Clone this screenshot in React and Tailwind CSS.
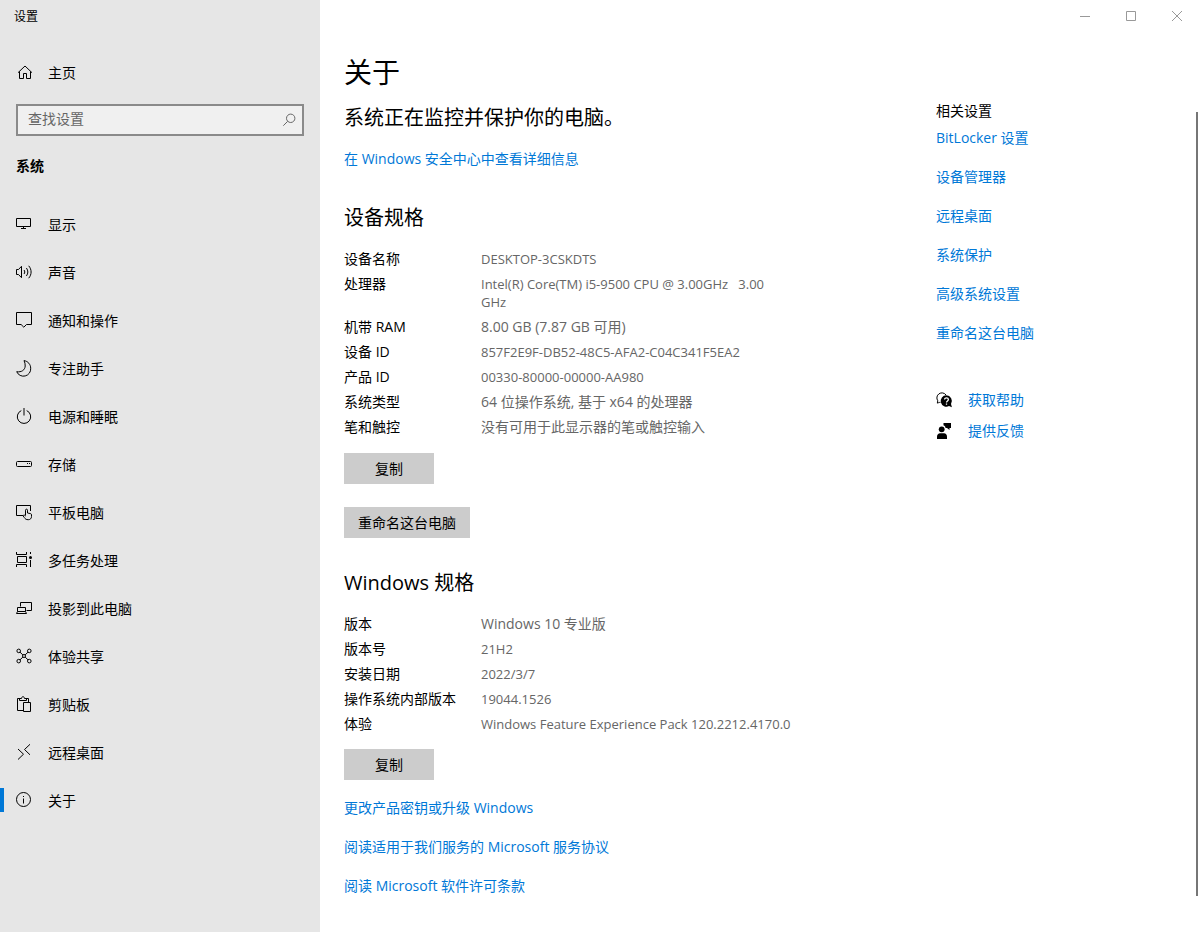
import React from "react";
import { useState } from "react";

const Icon = ({ children }) => (
  <svg
    width="16"
    height="16"
    viewBox="0 0 16 16"
    fill="none"
    stroke="currentColor"
    strokeWidth="1"
    className="shrink-0 overflow-visible"
    aria-hidden="true"
  >
    {children}
  </svg>
);

const HomeIcon = () => (
  <Icon>
    <path d="M2 8.700 9 2l7 6.700M3.500 7.500v7h4v-5h3v5h4v-7" />
  </Icon>
);

const menu = [
  {
    label: "显示",
    icon: <path d="M.5 2.500h14v8H.5zM7.500 10.500v2M5 12.500h5" />,
  },
  {
    label: "声音",
    icon: (
      <path d="M.5 5.500h2l3-3.200v11.400l-3-3.200h-2zM8 6c1 1.200 1 2.800 0 4M10.300 4c2 2.400 2 5.600 0 8M12.700 1.800c3.200 3.800 3.200 8.600 0 12.400" />
    ),
  },
  {
    label: "通知和操作",
    icon: <path d="M.5.5h15v12h-5l-2.700 2.700-2.700-2.700H.5z" />,
  },
  {
    label: "专注助手",
    icon: (
      <path d="M8 .6c4 .6 6.700 3.900 6.700 7.600A7.300 7.300 0 0 1 .7 11.700C5.500 12.500 9 10 9.200 6 9.200 4 8.900 2.300 8 .6z" />
    ),
  },
  {
    label: "电源和睡眠",
    icon: <path d="M8 0v7.500M5.300 2.600a6.700 6.700 0 1 0 5.400 0" />,
  },
  {
    label: "存储",
    icon: (
      <>
        <rect x=".5" y="5.500" width="15" height="5" rx="1" />
        <path d="M11 7.500h1M13 7.500h1" />
      </>
    ),
  },
  {
    label: "平板电脑",
    icon: (
      <path d="M7 11.500H.5v-10h14V7M9.500 11.500V6.200c0-1.400 2-1.400 2 0V9l3 .6c.7.2 1 .5 1 1.200v1.700c0 2-1.300 3.200-3.200 3.200-2.300 0-3-.7-4-2.200L7 11.800c.4-1 1.500-1 2.500.2" />
    ),
  },
  {
    label: "多任务处理",
    icon: (
      <>
        <path d="M1.500 4.500h9v6h-9zM.5 0v2.500h10V0M.5 15v-2.500h10V15M14.500 0v2M14.500 8v7" />
        <circle cx="14.500" cy="5.500" r="1.500" fill="currentColor" stroke="none" />
      </>
    ),
  },
  {
    label: "投影到此电脑",
    icon: (
      <path d="M4.500 6.500v-4h11v8h-5M1.500 11.500v-4h8v4L10.500 13.500H.5l1-2h8" />
    ),
  },
  {
    label: "体验共享",
    icon: (
      <>
        <circle cx="2.700" cy="2.900" r="1.800" />
        <circle cx="13.300" cy="2.900" r="1.800" />
        <circle cx="2.700" cy="13.100" r="1.800" />
        <circle cx="13.300" cy="13.100" r="1.800" />
        <circle cx="8" cy="8" r="1.500" />
        <path d="m4 4.200 2.900 2.700M12 4.200 9.100 6.900M4 11.800l2.900-2.700M12 11.800 9.100 9.100" />
      </>
    ),
  },
  {
    label: "剪贴板",
    icon: (
      <path d="M7.500 14.500h-6v-12h2.500M10 2.500h2.500v4M3.500 4.500v-2h2c0-2.400 3-2.400 3 0h2v2zM7.500 6.500h7v9h-7z" />
    ),
  },
  {
    label: "远程桌面",
    icon: <path d="m2 5 5.500 5.200L2 15.500M14 .3 8.500 5.500 14 10.800" />,
  },
  {
    label: "关于",
    icon: (
      <>
        <circle cx="7.500" cy="7.500" r="7" />
        <path d="M7.500 6.500v5M7.500 4v1" />
      </>
    ),
  },
];

const deviceSpecs = [
  { name: "设备名称", value: "DESKTOP-3CSKDTS", latin: true },
  {
    name: "处理器",
    value: "Intel(R) Core(TM) i5-9500 CPU @ 3.00GHz \u00a0 3.00 GHz",
    latin: true,
  },
  { name: "机带 RAM", value: "8.00 GB (7.87 GB 可用)" },
  { name: "设备 ID", value: "857F2E9F-DB52-48C5-AFA2-C04C341F5EA2", latin: true },
  { name: "产品 ID", value: "00330-80000-00000-AA980", latin: true },
  { name: "系统类型", value: "64 位操作系统, 基于 x64 的处理器" },
  { name: "笔和触控", value: "没有可用于此显示器的笔或触控输入" },
];

const windowsSpecs = [
  { name: "版本", value: "Windows 10 专业版" },
  { name: "版本号", value: "21H2", latin: true },
  { name: "安装日期", value: "2022/3/7", latin: true },
  { name: "操作系统内部版本", value: "19044.1526", latin: true },
  {
    name: "体验",
    value: "Windows Feature Experience Pack 120.2212.4170.0",
    latin: true,
  },
];

const licenseLinks = [
  "更改产品密钥或升级 Windows",
  "阅读适用于我们服务的 Microsoft 服务协议",
  "阅读 Microsoft 软件许可条款",
];

const relatedLinks = [
  "BitLocker 设置",
  "设备管理器",
  "远程桌面",
  "系统保护",
  "高级系统设置",
  "重命名这台电脑",
];

const SpecTable = ({ rows }) => (
  <table className="mt-[18px] w-full max-w-[448px] table-fixed text-left leading-[18px]">
    <tbody>
      {rows.map(({ name, value, latin }) => (
        <tr key={name} className="align-top">
          <th scope="row" className="w-[137px] pb-[7px] font-normal">
            {name}
          </th>
          <td className={`pb-[7px] text-[#666666] ${latin ? "text-[13px]" : ""}`}>
            {value}
          </td>
        </tr>
      ))}
    </tbody>
  </table>
);

const Button = ({ children }) => (
  <button
    type="button"
    className="block h-[31px] min-w-[90px] bg-[#cccccc] px-[14px] hover:bg-[#bbbbbb]"
  >
    {children}
  </button>
);

const Link = ({ children }) => (
  <a href="#" className="block leading-5 text-[#0078d7] hover:text-gray-500">
    {children}
  </a>
);

const App = () => {
  const [active, setactive] = useState("关于");
  const [search, setsearch] = useState("");

  return (
    <div className="flex min-h-screen bg-white font-['Open_Sans','Noto_Sans_CJK_SC',sans-serif] text-sm text-black">
      <aside className="w-80 shrink-0 bg-[#e6e6e6]">
        <div className="flex h-8 items-center px-[14px] pt-0.5 text-xs">设置</div>
        <a href="#" className="mt-4 flex h-12 items-center gap-4 px-4">
          <HomeIcon />
          <span className="pt-0.5">主页</span>
        </a>
        <div className="mx-4 mt-2 flex h-8 items-center border-2 border-[#8a8a8a] bg-[#f0f0f0] pr-[5px] pl-[10px] text-[#666666]">
          <input
            type="text"
            aria-label="查找设置"
            placeholder="查找设置"
            value={search}
            onChange={(e) => setsearch(e.target.value)}
            className="min-w-0 flex-1 bg-transparent pb-0.5 outline-none placeholder:text-[#666666]"
          />
          <Icon>
            <circle cx="9.700" cy="6.300" r="4.200" />
            <path d="m6.700 9.300-4.400 4.400" />
          </Icon>
        </div>
        <h2 className="mt-5 px-4 leading-5 font-bold">系统</h2>
        <nav className="mt-6">
          {menu.map(({ label, icon }) => (
            <a
              key={label}
              href="#"
              onClick={() => setactive(label)}
              className="flex h-12 items-center"
            >
              <span
                className={`h-6 w-1 ${active === label ? "bg-[#0078d7]" : ""}`}
              ></span>
              <span className="flex items-center gap-4 pl-3">
                <Icon>{icon}</Icon>
                <span className="pt-0.5">{label}</span>
              </span>
            </a>
          ))}
        </nav>
      </aside>

      <div className="flex min-w-0 flex-1 flex-col">
        <div className="flex h-8 justify-end text-[#999999]">
          <button
            type="button"
            aria-label="最小化"
            className="flex w-[46px] items-center justify-center"
          >
            <Icon>
              <path d="M3 8.500h10" />
            </Icon>
          </button>
          <button
            type="button"
            aria-label="最大化"
            className="flex w-[46px] items-center justify-center"
          >
            <Icon>
              <path d="M3.500 3.500h9v9h-9z" />
            </Icon>
          </button>
          <button
            type="button"
            aria-label="关闭"
            className="flex w-[46px] items-center justify-center"
          >
            <Icon>
              <path d="m3 3 10 10M13 3 3 13" />
            </Icon>
          </button>
        </div>

        <div className="flex flex-1">
          <main className="w-[616px] pt-[22px] pl-6">
            <h1 className="text-[28px] leading-9">关于</h1>
            <p className="mt-[14px] text-xl leading-7">系统正在监控并保护你的电脑。</p>
            <div className="mt-[17px]">
              <Link>在 Windows 安全中心中查看详细信息</Link>
            </div>

            <h2 className="mt-[35px] text-xl leading-7">设备规格</h2>
            <SpecTable rows={deviceSpecs} />
            <div className="mt-[10px] flex flex-col items-start gap-[23px]">
              <Button>复制</Button>
              <Button>重命名这台电脑</Button>
            </div>

            <h2 className="mt-[31px] text-xl leading-7">Windows 规格</h2>
            <SpecTable rows={windowsSpecs} />
            <div className="mt-[9px]">
              <Button>复制</Button>
            </div>
            <div className="mt-[18px] flex flex-col items-start gap-[19px]">
              {licenseLinks.map((text) => (
                <Link key={text}>{text}</Link>
              ))}
            </div>
          </main>

          <section className="flex-1 pt-[69px]">
            <h2 className="leading-5">相关设置</h2>
            <div className="mt-[7px] flex flex-col items-start gap-[19px]">
              {relatedLinks.map((text) => (
                <Link key={text}>{text}</Link>
              ))}
            </div>
            <div className="mt-[47px] flex flex-col items-start gap-[11px]">
              <div className="flex items-center gap-4">
                <Icon>
                  <path d="M4.500 10.300c-1 0-1.600.3-3.200.8l.5-2.300A4.900 4.900 0 1 1 10 3" />
                  <path
                    d="M10.300 3.300a5.700 5.700 0 1 0 2.700 10.800l2.900 1.200-.9-3.300a5.700 5.700 0 0 0-4.700-8.700z"
                    fill="currentColor"
                    stroke="none"
                  />
                  <path
                    d="M8.600 7.600c0-2.300 3.800-2.200 3.800 0 0 1.300-1.900 1.400-1.900 2.900M10.500 11.400v1.300"
                    stroke="white"
                    strokeWidth="1.300"
                  />
                </Icon>
                <Link>获取帮助</Link>
              </div>
              <div className="flex items-center gap-4">
                <Icon>
                  <g fill="currentColor" stroke="none">
                    <circle cx="5.700" cy="6.300" r="2.900" />
                    <path d="M1 16v-2.300C1 11.500 2.500 10.300 4 10.300h4c1.800 0 3 1.400 3 3.400V16zM7.500 0H15v5h-1.500v2L11 5H9.500C9.500 3.500 8.700 2.700 7.500 2.300z" />
                  </g>
                </Icon>
                <Link>提供反馈</Link>
              </div>
            </div>
          </section>

          {/* scroll thumb */}
          <div className="mt-20 mr-[2px] mb-9 w-[2px] bg-[#767676]"></div>
        </div>
      </div>
    </div>
  );
};

export default App;
